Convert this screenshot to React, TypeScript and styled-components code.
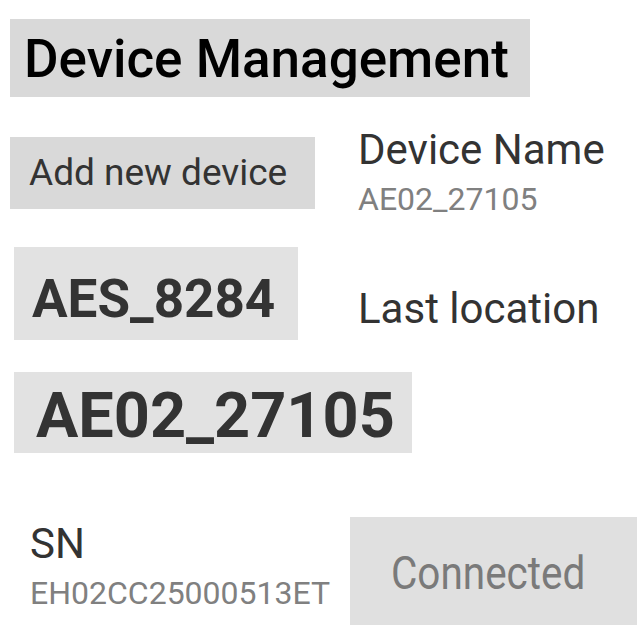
import React from "react";
import styled, { createGlobalStyle } from "styled-components";

const GlobalStyle = createGlobalStyle`
  html, body {
    margin: 0;
    padding: 0;
    background: #ffffff;
  }
  body {
    font-family: Roboto, "Noto Sans", "Liberation Sans", sans-serif;
    color: #333333;
  }
`;

const Page = styled.div`
  width: 640px;
  height: 640px;
  box-sizing: border-box;
  padding: 19px 0 0 10px;
  display: flex;
  flex-direction: column;
  overflow: hidden;
  background: #ffffff;
`;

const TitleBox = styled.h1`
  margin: 0;
  width: 520px;
  height: 78px;
  box-sizing: border-box;
  padding-left: 14px;
  background: #d9d9d9;
  font-size: 53px;
  font-weight: 500;
  line-height: 80px;
  color: #000000;
  white-space: nowrap;
`;

const Row = styled.div<{ $top: number; $align?: string }>`
  display: flex;
  align-items: ${(p) => p.$align ?? "flex-start"};
  margin-top: ${(p) => p.$top}px;
`;

const GrayBox = styled.div<{
  $w: number;
  $h: number;
  $fs: number;
  $weight?: number;
  $padL: number;
  $padT: number;
  $shade?: string;
  $ml?: number;
}>`
  width: ${(p) => p.$w}px;
  height: ${(p) => p.$h}px;
  box-sizing: border-box;
  margin-left: ${(p) => p.$ml ?? 0}px;
  padding: ${(p) => p.$padT}px 0 0 ${(p) => p.$padL}px;
  background: ${(p) => p.$shade ?? "#e2e2e2"};
  font-size: ${(p) => p.$fs}px;
  font-weight: ${(p) => p.$weight ?? 400};
  line-height: ${(p) => Math.round(p.$fs * 1.172)}px;
  color: #333333;
  white-space: nowrap;
  flex: none;
`;

const Info = styled.div<{ $ml: number; $mt?: number; $w?: number }>`
  display: flex;
  flex-direction: column;
  gap: 4px;
  margin-left: ${(p) => p.$ml}px;
  margin-top: ${(p) => p.$mt ?? 0}px;
  ${(p) => (p.$w ? `width: ${p.$w}px; flex: none;` : "")}
`;

const Label = styled.div`
  font-size: 42px;
  line-height: 48px;
  color: #333333;
  white-space: nowrap;
`;

const SubValue = styled.div`
  font-size: 32px;
  line-height: 42px;
  color: #808080;
  white-space: nowrap;
`;

const ConnectedButton = styled.button`
  width: 287px;
  height: 108px;
  flex: none;
  border: none;
  margin: 0;
  padding: 2px 0 0 41px;
  background: #e0e0e0;
  text-align: left;
  font-family: inherit;
  font-size: 46px;
  line-height: 108px;
  color: #7a7a7a;
  white-space: nowrap;
  box-sizing: border-box;
`;

const Condensed = styled.span`
  display: inline-block;
  transform: scaleX(0.88);
  transform-origin: left center;
`;

export default function App() {
  return (
    <>
      <GlobalStyle />
      <Page>
        <TitleBox>Device Management</TitleBox>

        <Row $top={29} $align="center">
          <GrayBox $w={305} $h={72} $fs={37} $padL={19} $padT={14} $shade="#d9d9d9">
            Add new device
          </GrayBox>
          <Info $ml={43}>
            <Label>Device Name</Label>
            <SubValue>AE02_27105</SubValue>
          </Info>
        </Row>

        <Row $top={27}>
          <GrayBox $w={284} $h={93} $fs={53} $weight={700} $padL={18} $padT={21} $ml={4}>
            AES_8284
          </GrayBox>
          <Info $ml={60} $mt={38}>
            <Label>Last location</Label>
          </Info>
        </Row>

        <Row $top={32}>
          <GrayBox $w={398} $h={81} $fs={63} $weight={700} $padL={22} $padT={7} $ml={4}>
            AE02_27105
          </GrayBox>
        </Row>

        <Row $top={64}>
          <Info $ml={20} $mt={3} $w={320}>
            <Label>SN</Label>
            <SubValue>EH02CC25000513ET</SubValue>
          </Info>
          <ConnectedButton disabled>
            <Condensed>Connected</Condensed>
          </ConnectedButton>
        </Row>
      </Page>
    </>
  );
}
